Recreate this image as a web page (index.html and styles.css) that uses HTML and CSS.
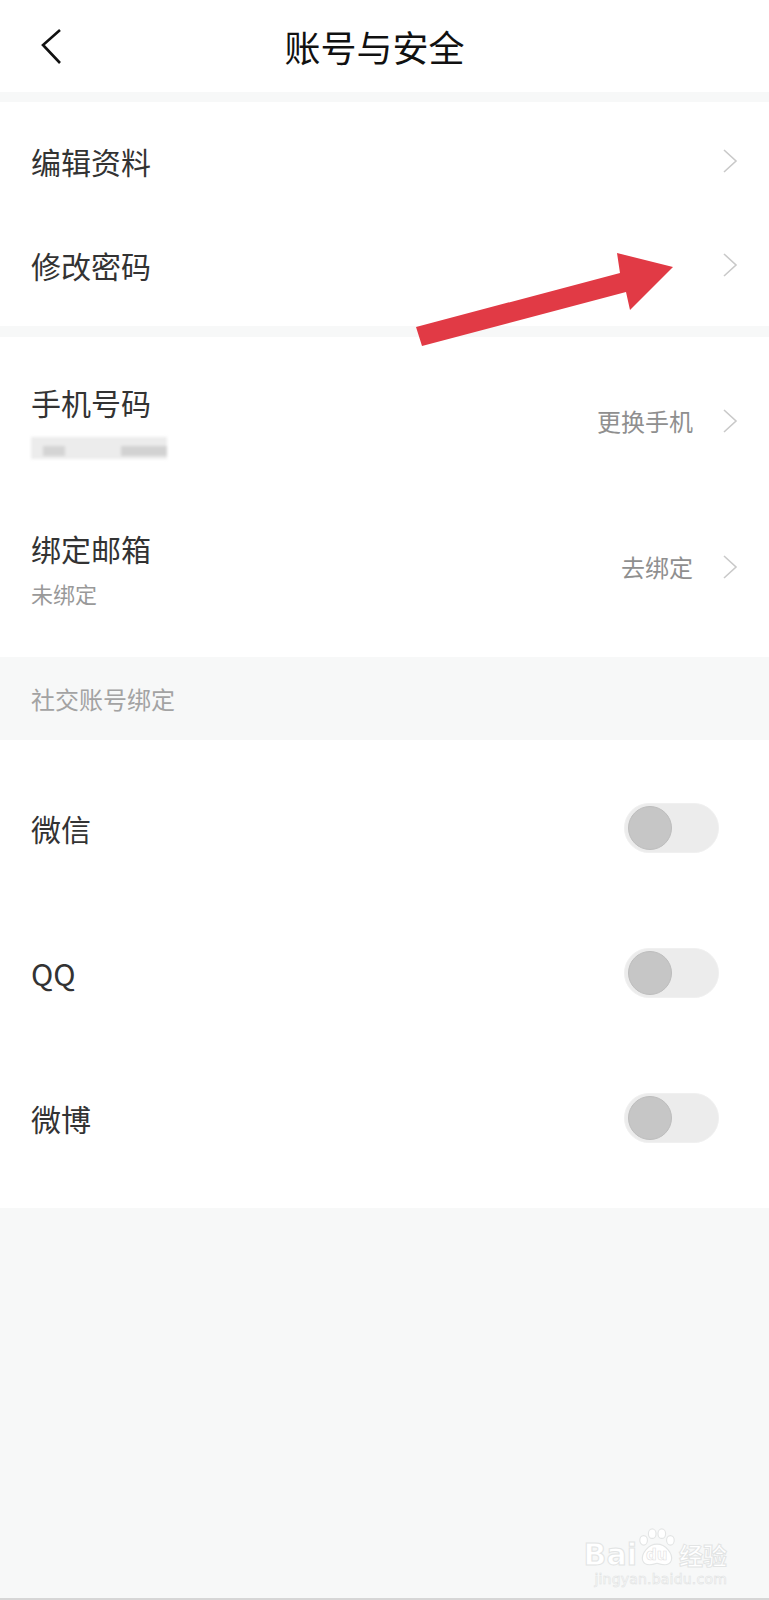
FILE: index.html
```html
<!DOCTYPE html>
<html lang="zh-CN">
<head>
<meta charset="utf-8">
<title>账号与安全</title>
<link rel="stylesheet" href="styles.css">
</head>
<body>
<div class="page">
  <header class="header">
    <div class="back">
      <svg width="24" height="40" viewBox="0 0 24 40"><polyline points="20,4 3,19 20,37" fill="none" stroke="#111" stroke-width="2.6" stroke-linejoin="miter"/></svg>
    </div>
    <div class="title">账号与安全</div>
    <div></div>
  </header>

  <section class="group g1">
    <div class="row r104">
      <span class="label">编辑资料</span>
      <span class="right"><svg class="chev" width="16" height="26" viewBox="0 0 16 26"><polyline points="2,2 14,13 2,24" fill="none" stroke="#c9c9c9" stroke-width="1.6"/></svg></span>
    </div>
    <div class="row r104">
      <span class="label">修改密码</span>
      <span class="right"><svg class="chev" width="16" height="26" viewBox="0 0 16 26"><polyline points="2,2 14,13 2,24" fill="none" stroke="#c9c9c9" stroke-width="1.6"/></svg></span>
    </div>
  </section>

  <section class="group g2">
    <div class="row r146">
      <div class="stack">
        <span class="label">手机号码</span>
        <div class="blur"></div>
      </div>
      <span class="right"><span class="value">更换手机</span><svg class="chev" width="16" height="26" viewBox="0 0 16 26"><polyline points="2,2 14,13 2,24" fill="none" stroke="#c9c9c9" stroke-width="1.6"/></svg></span>
    </div>
    <div class="row r146">
      <div class="stack">
        <span class="label">绑定邮箱</span>
        <span class="sub">未绑定</span>
      </div>
      <span class="right"><span class="value">去绑定</span><svg class="chev" width="16" height="26" viewBox="0 0 16 26"><polyline points="2,2 14,13 2,24" fill="none" stroke="#c9c9c9" stroke-width="1.6"/></svg></span>
    </div>
  </section>

  <div class="sechead">社交账号绑定</div>

  <section class="group g3">
    <div class="row r145 tg">
      <span class="label">微信</span>
      <span class="toggle"><span class="knob"></span></span>
    </div>
    <div class="row r145 tg">
      <span class="label">QQ</span>
      <span class="toggle"><span class="knob"></span></span>
    </div>
    <div class="row r145 tg">
      <span class="label">微博</span>
      <span class="toggle"><span class="knob"></span></span>
    </div>
  </section>

  <div class="rest">
    <div class="watermark">
      <div class="wm-top">
        <span class="wm-bai">Bai</span>
        <span class="wm-paw">
          <svg width="44" height="44" viewBox="0 0 46 44">
            <g fill="#ffffff" stroke="#e3e5e5" stroke-width="1.2">
              <ellipse cx="9" cy="14" rx="4" ry="5"/>
              <ellipse cx="18" cy="7" rx="4" ry="5"/>
              <ellipse cx="28" cy="7" rx="4" ry="5"/>
              <ellipse cx="37" cy="14" rx="4" ry="5"/>
              <path d="M23 18 C14 18 6 28 8 35 C10 41 17 40 23 38 C29 40 36 41 38 35 C40 28 32 18 23 18 Z"/>
            </g>
          </svg>
          <span class="wm-du">du</span>
        </span>
        <span class="wm-jy">经验</span>
      </div>
      <div class="wm-url">jingyan.baidu.com</div>
    </div>
  </div>

  <svg class="arrow" width="769" height="400" viewBox="0 0 769 400">
    <polygon points="416,327 620,273 617,253 673,267 630,310 626,292 422,346" fill="#e13a45"/>
  </svg>
</div>
</body>
</html>
```

FILE: styles.css
```css
* { box-sizing: border-box; }
html, body {
  margin: 0;
  padding: 0;
  background: #f7f8f8;
}
body {
  font-family: "Noto Sans CJK SC", "Noto Sans", sans-serif;
  color: #333;
}
.page {
  position: relative;
  width: 769px;
  min-height: 1600px;
  display: flex;
  flex-direction: column;
  border-bottom: 2px solid #d6d6d6;
}
.header {
  height: 92px;
  background: #fff;
  display: grid;
  grid-template-columns: 80px 1fr 100px;
  align-items: center;
}
.back {
  padding-left: 40px;
  display: flex;
  align-items: center;
  height: 40px;
}
.title {
  text-align: center;
  font-size: 36px;
  color: #111;
  line-height: 44px;
}
.group {
  background: #fff;
}
.g1 {
  margin-top: 10px;
  padding: 7px 0 9px;
}
.g2 {
  margin-top: 11px;
  padding: 11px 0 17px;
}
.g3 {
  padding: 15px 0 18px;
}
.row {
  display: flex;
  align-items: center;
  justify-content: space-between;
  padding: 0 31px 0 31px;
}
.r104 { height: 104px; }
.r146 { height: 146px; }
.r145 { height: 145px; }
.label {
  font-size: 30px;
  line-height: 42px;
  color: #333;
}
.stack {
  display: flex;
  flex-direction: column;
  align-items: flex-start;
}
.sub {
  margin-top: 9px;
  font-size: 22px;
  line-height: 30px;
  color: #999;
}
.blur {
  margin-top: 9px;
  width: 136px;
  height: 30px;
  position: relative;
  background:
    linear-gradient(90deg, transparent 0 9%, #d4d4d4 9% 25%, transparent 25% 66%, #d2d2d2 66% 100%) 0 14px / 100% 10px no-repeat,
    linear-gradient(#ececec, #ececec) 0 5px / 100% 22px no-repeat;
  filter: blur(1.5px);
}
.right {
  display: flex;
  align-items: center;
}
.value {
  font-size: 24px;
  line-height: 30px;
  color: #8f8f8f;
  margin-right: 29px;
}
.chev { display: block; }
.sechead {
  height: 83px;
  display: flex;
  align-items: center;
  padding-left: 31px;
  font-size: 24px;
  color: #a3a3a3;
  background: #f7f8f8;
}
.tg { padding-right: 50px; }
.toggle {
  width: 95px;
  height: 50px;
  border-radius: 25px;
  background: #ececec;
  border: 1px solid #f0f0f0;
  display: flex;
  align-items: center;
  padding-left: 3px;
}
.knob {
  width: 44px;
  height: 44px;
  border-radius: 50%;
  background: #c6c6c6;
  border: 1px solid #bdbdbd;
}
.rest {
  flex: 1;
  position: relative;
  background: #f7f8f8;
}
.watermark {
  position: absolute;
  right: 42px;
  bottom: 10px;
  display: flex;
  flex-direction: column;
  align-items: flex-end;
  font-family: "DejaVu Sans", sans-serif;
  color: #ffffff;
}
.wm-top {
  display: flex;
  align-items: flex-end;
}
.wm-bai {
  font-size: 30px;
  font-weight: bold;
  line-height: 30px;
  color: #fff;
  -webkit-text-stroke: 1px #e2e4e4;
  margin-right: -2px;
}
.wm-paw {
  position: relative;
  display: block;
  width: 44px;
  height: 44px;
}
.wm-paw svg { display: block; }
.wm-du {
  position: absolute;
  left: 11px;
  top: 20px;
  font-size: 15px;
  font-weight: bold;
  color: #fff;
  -webkit-text-stroke: 0.6px #dfe1e1;
}
.wm-jy {
  font-family: "Noto Sans CJK SC", sans-serif;
  font-size: 24px;
  line-height: 30px;
  color: #fff;
  -webkit-text-stroke: 1px #e2e4e4;
  font-weight: bold;
}
.wm-url {
  font-size: 14px;
  line-height: 18px;
  color: #fff;
  -webkit-text-stroke: 0.6px #e0e2e2;
  letter-spacing: 0.2px;
}
.arrow {
  position: absolute;
  left: 0;
  top: 0;
  pointer-events: none;
}
```
